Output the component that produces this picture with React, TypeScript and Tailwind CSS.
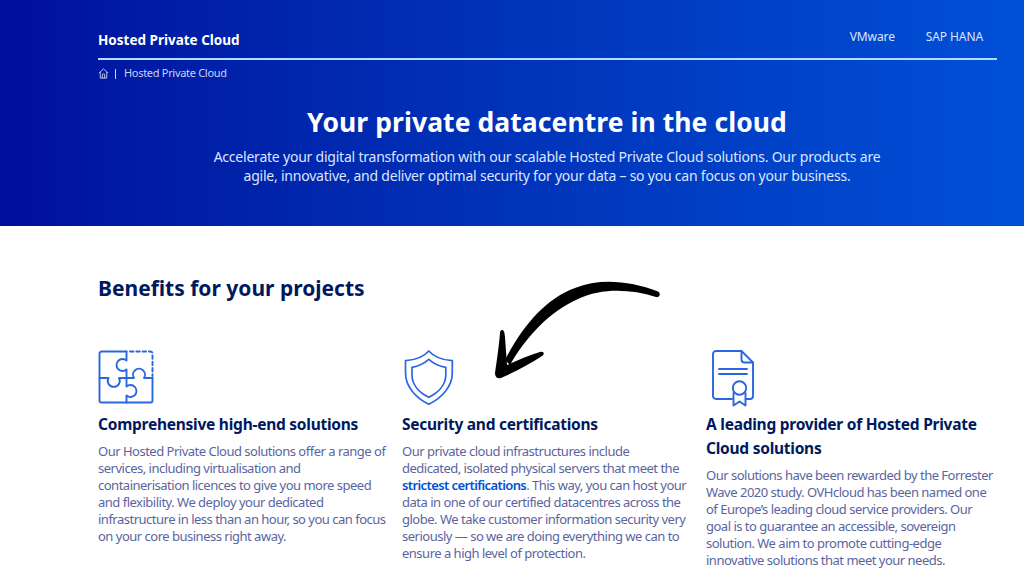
import React from "react";

function Puzzle() {
  return (
    <svg width="56" height="56" viewBox="0 0 56 56" fill="none" stroke="#2a66e0" strokeWidth="1.9" strokeLinejoin="round" strokeLinecap="round">
      <path d="M28.500 1.500H3.500a2 2 0 0 0-2 2V50.500a2 2 0 0 0 2 2H52.500a2 2 0 0 0 2-2V28" />
      <path d="M28.500 1.500V10.500A6 6 0 1 0 28.500 19.500V36.500A6 6 0 1 1 28.500 45.500V52.500" />
      <path d="M1.500 28H10.500A6 6 0 1 0 21 28H36A6 6 0 1 1 46 28H54.500" />
      <path d="M32 1.500H52.500a2 2 0 0 1 2 2V26" strokeDasharray="3.500 2.800" />
    </svg>
  );
}

function Shield() {
  return (
    <svg width="50" height="56" viewBox="0 0 50 56" fill="none" stroke="#2a66e0" strokeWidth="1.7" strokeLinejoin="round">
      <path d="M24.800 1C20 6.500 11 10 1.500 10.700V23C1.500 36 11 47.500 24.800 54.300C38.500 47.500 48.300 36 48.300 23V10.700C38.500 10 29.500 6.500 24.800 1Z" />
      <path d="M24.800 9.300C20 13.500 14 16.300 8 17.300V25C8 34.500 15 42.500 24.800 47.300C34.500 42.500 41.800 34.500 41.800 25V17.300C35.500 16.300 29.500 13.500 24.800 9.300Z" />
    </svg>
  );
}

function Cert() {
  return (
    <svg width="44" height="57" viewBox="0 0 44 57" fill="none" stroke="#2a66e0" strokeWidth="1.9" strokeLinejoin="round" strokeLinecap="round">
      <path d="M20 49H4a3 3 0 0 1-3-3V4a3 3 0 0 1 3-3H29.500L41 12.500V46a3 3 0 0 1-3 3H34.500" />
      <path d="M29.500 1V9.500a3 3 0 0 0 3 3H41" />
      <path d="M7 19H35M7 24H35" />
      <circle cx="27.500" cy="38" r="6.700" />
      <path d="M21.500 43V55.500L27.500 51.500L33.500 55.500V43" />
    </svg>
  );
}

function Arrow() {
  return (
    <svg className="absolute left-[490px] top-[275px]" width="180" height="110" viewBox="0 0 180 110" fill="#000">
      <path d="M168 16.500C140 6 110 3 85 13C55 24 32 52 15 85L20 90C36 62 60 36 88 24C112 13 140 14 166 22C170 23 171 18 168 16.500Z" />
      <path d="M12 55C14 55 14.500 57 15 62L17 90C28 85 40 80 50 77C54 76 55 79 52 81C40 89 25 97 11 103C7 104 5 102 5 98C7 85 9 70 10 58C10 56 11 55 12 55Z" />
    </svg>
  );
}

function Col({ icon, title, children }: { icon: React.ReactNode; title: React.ReactNode; children: React.ReactNode }) {
  return (
    <div className="w-[292px] shrink-0">
      <div className="h-[56px] flex items-start">{icon}</div>
      <h3 className="mt-[6px] text-[#00185e] font-bold text-[15.500px] leading-[24px] tracking-[-0.25px]">{title}</h3>
      <p className="mt-[7px] text-[#5a659f] text-[13px] leading-[17px] tracking-[-0.5px]">{children}</p>
    </div>
  );
}

export default function App() {
  return (
    <div className="relative w-[1024px] h-[583px] overflow-hidden bg-white font-['Noto_Sans',sans-serif]">
      <header className="h-[226px] bg-gradient-to-r from-[#000e9c] to-[#0050d7] text-white">
        <div className="ml-[98px] mr-[27px] pt-[20px]">
          <div className="flex justify-between h-[40px] border-b-2 border-[#b0dcff]">
            <span className="font-bold text-[13.500px] leading-[40px]">Hosted Private Cloud</span>
            <div className="flex gap-[31px] pr-[14px] text-[12px] leading-[33px] text-[#dbe6ff] tracking-[-0.1px]">
              <span>VMware</span>
              <span>SAP HANA</span>
            </div>
          </div>
          <div className="flex items-center h-[27px] text-[11px] text-[#c8d4f5] tracking-[-0.3px]">
            <svg width="11" height="11" viewBox="0 0 24 24" fill="none" stroke="#c8d4f5" strokeWidth="2" strokeLinejoin="round"><path d="M2 11 12 2l10 9M5 9v13h14V9M9.500 22v-7a2.500 2.500 0 0 1 5 0v7" /></svg>
            <span className="mx-[6px] h-[10px] w-px bg-[#c8d4f5]" />
            <span className="ml-[2px]">Hosted Private Cloud</span>
          </div>
        </div>
        <div className="pl-[70px]">
          <h1 className="mt-[15px] text-center font-bold text-[26.500px] leading-[40px] tracking-[0.07px]">Your private datacentre in the cloud</h1>
          <p className="mt-[5px] mx-auto w-[680px] text-center text-[14px] leading-[19px] text-[#dbe6ff] tracking-[-0.22px]">
            Accelerate your digital transformation with our scalable Hosted Private Cloud solutions. Our products are agile, innovative, and deliver optimal security for your data – so you can focus on your business.
          </p>
        </div>
      </header>
      <main className="pl-[98px]">
        <h2 className="pt-[45px] text-[#00185e] font-bold text-[21px] leading-[34px]">Benefits for your projects</h2>
        <div className="mt-[45px] flex gap-[12px]">
          <Col icon={<Puzzle />} title="Comprehensive high-end solutions">
            Our Hosted Private Cloud solutions offer a range of services, including virtualisation and containerisation licences to give you more speed and flexibility. We deploy your dedicated infrastructure in less than an hour, so you can focus on your core business right away.
          </Col>
          <Col icon={<div className="ml-[2px]"><Shield /></div>} title="Security and certifications">
            Our private cloud infrastructures include<br />dedicated, isolated physical servers that meet the<br /><span className="text-[#0050d7] font-semibold tracking-[-0.6px]">strictest certifications</span>. This way, you can host your<br />data in one of our certified datacentres across the<br />globe. We take customer information security very<br />seriously — so we are doing everything we can to<br />ensure a high level of protection.
          </Col>
          <Col icon={<div className="ml-[6px]"><Cert /></div>} title="A leading provider of Hosted Private Cloud solutions">
            Our solutions have been rewarded by the Forrester Wave 2020 study. OVHcloud has been named one of Europe’s leading cloud service providers. Our goal is to guarantee an accessible, sovereign solution. We aim to promote cutting-edge innovative solutions that meet your needs.
          </Col>
        </div>
      </main>
      <Arrow />
    </div>
  );
}
